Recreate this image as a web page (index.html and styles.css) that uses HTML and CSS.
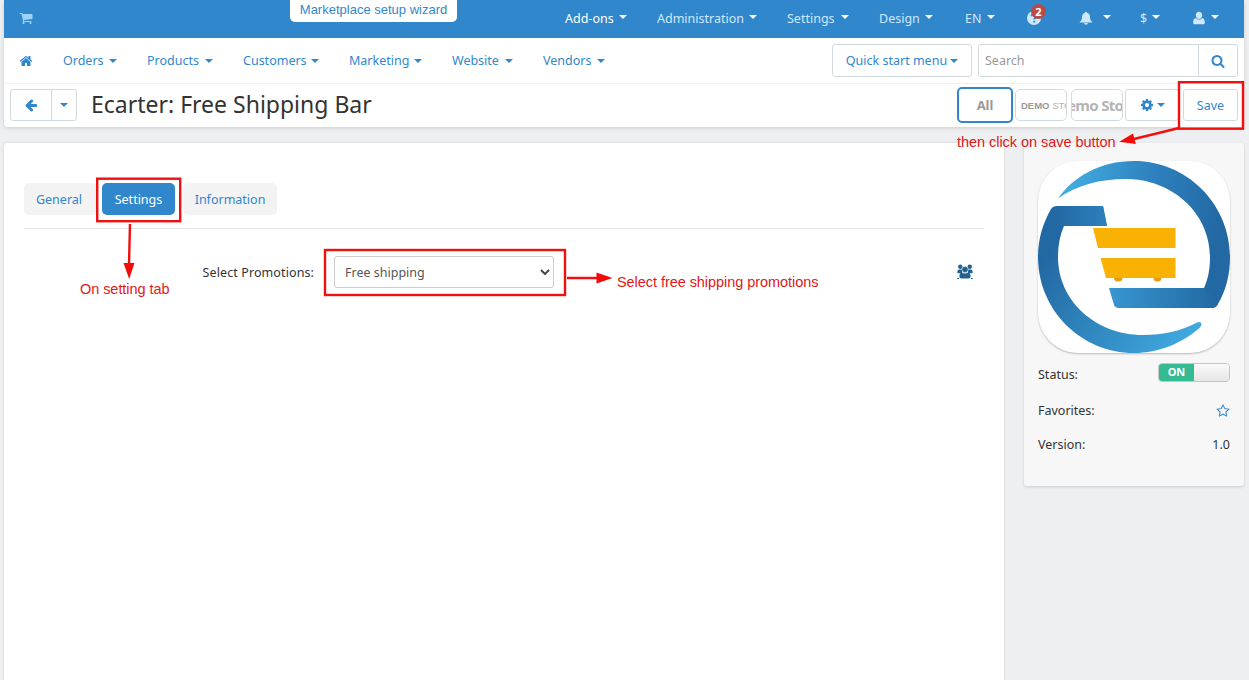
FILE: index.html
```html
<!DOCTYPE html>
<html lang="en">
<head>
    <meta charset="UTF-8">
    <meta name="viewport" content="width=device-width, initial-scale=1.0">
    <title>Ecarter: Free Shipping Bar</title>
    <link rel="stylesheet" href="styles.css">
</head>
<body>

<div class="page">
    <header class="header">
        <div class="topbar">
            <svg class="icon cart" viewBox="0 0 1792 1792"><path d="M704 1536q0 52-38 90t-90 38-90-38-38-90 38-90 90-38 90 38 38 90zm896 0q0 52-38 90t-90 38-90-38-38-90 38-90 90-38 90 38 38 90zm128-1088v512q0 24-16.5 42.5t-40.5 21.5l-1044 122q13 60 13 70 0 16-24 64h920q26 0 45 19t19 45-19 45-45 19h-1024q-26 0-45-19t-19-45q0-11 8-31.5t16-36 21.5-40 15.5-29.5l-177-823h-204q-26 0-45-19t-19-45 19-45 45-19h256q16 0 28.5 6.5t19.5 15.5 13 24.5 8 26 5.5 29.5 4.5 26h1201q26 0 45 19t19 45z"/></svg>
            <a class="wizard">Marketplace setup wizard</a>
            <nav class="top-menu">
                <a class="item active w-addons">Add-ons<i class="caret"></i></a>
                <a class="item w-admin">Administration<i class="caret"></i></a>
                <a class="item w-settings">Settings<i class="caret"></i></a>
                <a class="item w-design">Design<i class="caret"></i></a>
                <a class="item w-lang">EN<i class="caret"></i></a>
                <a class="item w-help">
                    <svg class="icon help" viewBox="0 0 16 16"><circle cx="8" cy="8" r="7"/><path class="mark" d="M5.6 6.3C5.8 3.6 10.3 3.8 10.2 6.4 10.1 8 8.3 7.9 8.2 9.4M8.2 10.8v1.8"/></svg>
                    <span class="badge">2</span>
                </a>
                <a class="item w-bell"><svg class="icon bell" viewBox="0 0 16 16"><path d="M8 0.8c.7 0 1 .5 1 1.1 2.4.5 3.5 2.400 3.500 4.600 0 3.200 1 4.900 2.700 6.100v.6H.8v-.6C2.500 11.400 3.500 9.700 3.500 6.500 3.500 4.300 4.600 2.400 7 1.900c0-.6.3-1.100 1-1.100zM6 13.700h4c0 1.100-.9 1.900-2 1.900s-2-.8-2-1.900z"/></svg><i class="caret"></i></a>
                <a class="item w-money">$<i class="caret"></i></a>
                <a class="item w-user"><svg class="icon user" viewBox="0 0 12 14"><path d="M6 .8c1.900 0 3.200 1.500 3.200 3.400S7.900 7.900 6 7.900 2.800 6.100 2.800 4.200 4.100.8 6 .8zM3 7.100c.8 1 1.800 1.500 3 1.500s2.200-.5 3-1.500c2 .2 2.800 2 2.800 4.300 0 1.200-.8 1.900-1.800 1.900H2C1 13.300.2 12.600.2 11.400.2 9.100 1 7.300 3 7.100z"/></svg><i class="caret"></i></a>
            </nav>
        </div>

        <div class="navbar">
            <svg class="icon home" viewBox="0 0 1792 1792"><path d="M1472 992v480q0 26-19 45t-45 19h-384v-384h-256v384h-384q-26 0-45-19t-19-45v-480q0-1 .5-3t.5-3l575-474 575 474q1 2 1 6zm223-69l-62 74q-8 9-21 11h-3q-13 0-21-7l-692-577-692 577q-12 8-24 7-13-2-21-11l-62-74q-8-10-7-23.500t11-21.500l719-599q32-26 76-26t76 26l244 204v-195q0-14 9-23t23-9h192q14 0 23 9t9 23v408l219 182q10 8 11 21.500t-7 23.500z"/></svg>
            <nav class="main-menu">
                <a class="item w-orders">Orders<i class="caret"></i></a>
                <a class="item w-products">Products<i class="caret"></i></a>
                <a class="item w-customers">Customers<i class="caret"></i></a>
                <a class="item w-marketing">Marketing<i class="caret"></i></a>
                <a class="item w-website">Website<i class="caret"></i></a>
                <a class="item w-vendors">Vendors<i class="caret"></i></a>
            </nav>
            <a class="btn quick">Quick start menu<i class="caret"></i></a>
            <div class="search">
                <input type="text" placeholder="Search">
                <button><svg class="icon" viewBox="0 0 1792 1792"><path d="M1216 832q0-185-131.500-316.500t-316.500-131.500-316.500 131.500-131.500 316.500 131.500 316.500 316.500 131.500 316.500-131.500 131.500-316.500zm512 832q0 52-38 90t-90 38q-54 0-90-38l-343-342q-179 124-399 124-143 0-273.500-55.500t-225-150-150-225-55.500-273.500 55.500-273.500 150-225 225-150 273.500-55.500 273.500 55.500 225 150 150 225 55.500 273.500q0 220-124 399l343 343q37 37 37 90z"/></svg></button>
            </div>
        </div>

        <div class="titlebar">
            <div class="back">
                <a><svg class="icon" viewBox="0 0 1792 1792"><path d="M1664 896v128q0 53-32.500 90.500t-84.500 37.500h-704l293 294q38 36 38 90t-38 90l-75 76q-37 37-90 37-52 0-91-37l-651-652q-37-37-37-90 0-52 37-91l651-650q38-38 91-38 52 0 90 38l75 74q38 38 38 91t-38 91l-293 293h704q52 0 84.500 37.500t32.500 90.500z"/></svg></a>
                <a><i class="caret"></i></a>
            </div>
            <h1>Ecarter: Free Shipping Bar</h1>
            <div class="actions">
                <a class="store all">All</a>
                <a class="store demo"><span><b>DEMO</b> STORE</span></a>
                <a class="store demo-big"><span>Demo Store</span></a>
                <a class="btn gear"><svg class="icon" viewBox="0 0 1792 1792"><path d="M1152 896q0-106-75-181t-181-75-181 75-75 181 75 181 181 75 181-75 75-181zm512-109v222q0 12-8 23t-20 13l-185 28q-19 54-39 91 35 50 107 138 10 12 10 25t-9 23q-27 37-99 108t-94 71q-12 0-26-9l-138-108q-44 23-91 38-16 136-29 186-7 28-36 28h-222q-14 0-24.500-8.500t-11.500-21.500l-28-184q-49-16-90-37l-141 107q-10 9-25 9-14 0-25-11-126-114-165-168-7-10-7-23 0-12 8-23 15-21 51-66.500t54-70.500q-27-50-41-99l-183-27q-13-2-21-12.500t-8-23.500v-222q0-12 8-23t19-13l186-28q14-46 39-92-40-57-107-138-10-12-10-24 0-10 9-23 26-36 98.500-107.500t94.500-71.500q13 0 26 10l138 107q44-23 91-38 16-136 29-186 7-28 36-28h222q14 0 24.500 8.500t11.500 21.500l28 184q49 16 90 37l142-107q9-9 24-9 13 0 25 10 129 119 165 170 7 8 7 22 0 12-8 23-15 21-51 66.500t-54 70.500q26 50 41 98l183 28q13 2 21 12.500t8 23.500z"/></svg><i class="caret"></i></a>
                <a class="btn save">Save</a>
            </div>
        </div>
    </header>

    <div class="columns">
        <main class="content">
            <div class="tabs">
                <a class="tab t-general">General</a>
                <a class="tab t-settings active">Settings</a>
                <a class="tab t-info">Information</a>
            </div>
            <div class="form-row">
                <label for="promotion">Select Promotions:</label>
                <div class="select">
                    <select id="promotion">
                        <option>Free shipping</option>
                    </select>
                    <svg class="chevron" viewBox="0 0 10 6"><path d="M1 1l4 4 4-4"/></svg>
                </div>
                <svg class="group" viewBox="0 0 16 16">
                    <circle cx="3.300" cy="2.800" r="2.200"/><circle cx="12.700" cy="2.800" r="2.200"/>
                    <path d="M.3 8.500C.3 6.500 1 5.500 2.500 5.400L5 5.600v3.600H1.300c-.6 0-1-.2-1-.7zM15.700 8.500c0-2-.7-3-2.200-3.100L11 5.600v3.600h3.700c.6 0 1-.2 1-.7z"/>
                    <circle class="head" cx="8" cy="5.500" r="3.100"/>
                    <path d="M2.400 12.300C2.400 9.800 3.500 8.400 5 8.400c1.800 1.400 4.200 1.400 6 0 1.500 0 2.600 1.400 2.600 3.900 0 1.400-.9 2.200-2.200 2.200H4.600c-1.300 0-2.200-.8-2.200-2.200zM.2 14.100h1.900v.8H.2zM13.900 14.100h1.900v.8h-1.900z"/>
                </svg>
            </div>
        </main>

        <aside class="sidebar">
            <svg class="logo" viewBox="0 0 192 192">
                <defs>
                    <linearGradient id="upper" gradientUnits="userSpaceOnUse" x1="20" y1="50" x2="180" y2="85">
                        <stop offset="0" stop-color="#43aee2"/>
                        <stop offset="0.500" stop-color="#2e82bf"/>
                        <stop offset="1" stop-color="#2268a3"/>
                    </linearGradient>
                    <linearGradient id="hook" gradientUnits="userSpaceOnUse" x1="71" y1="137" x2="180" y2="137">
                        <stop offset="0" stop-color="#3896d0"/>
                        <stop offset="1" stop-color="#2268a3"/>
                    </linearGradient>
                    <linearGradient id="lower" gradientUnits="userSpaceOnUse" x1="10" y1="90" x2="150" y2="180">
                        <stop offset="0" stop-color="#2268a3"/>
                        <stop offset="1" stop-color="#40a9de"/>
                    </linearGradient>
                    <linearGradient id="handle" gradientUnits="userSpaceOnUse" x1="15" y1="55" x2="69" y2="55">
                        <stop offset="0" stop-color="#2268a3"/>
                        <stop offset="1" stop-color="#2e80bd"/>
                    </linearGradient>
                </defs>
                <path fill="url(#upper)" d="M20 37.500C35 16 62 0 96 0c53 0 96 43 96 96 0 18-4 33-12 47q-2 4-6 4h-15l7-20c4-9 6-19 6-31 0-44-38-78-84-78-26 0-49 6-68 19.500z"/>
                <path fill="url(#hook)" d="M71 127h95l14 16q-2 4-6 4H81q-4 0-5-3z"/>
                <path fill="url(#lower)" d="M19 45h46l4 20H26c-4 9-6 19-6 31 0 45 39 78 85 78 20 0 38-4 54-12.500q4-1.500 4.500 1.500 0 2-2 4C144 182 121 192 96 192 43 192 0 149 0 96c0-18 5-34 13-48q2-3 6-3z"/>
                <path fill="url(#handle)" d="M19 45h46l4 20H18z"/>
                <g fill="#f9b104">
                    <path d="M55 67h82.500v20H60zM62.500 97h75v20H68z"/>
                </g>
                <path fill="#e39b12" d="M76 117h8.500a4.250 3.500 0 0 1-8.500 0zM115.500 117h8a4 3.500 0 0 1-8 0z"/>
            </svg>
            <div class="info status"><span>Status:</span><span class="switch"><b>ON</b><i></i></span></div>
            <div class="info favorites"><span>Favorites:</span>
                <svg class="icon star" viewBox="0 0 1792 1792"><path d="M1201 1004l306-297-422-62-189-382-189 382-422 62 306 297-73 421 378-199 377 199zm527-357q0 22-26 48l-363 354 86 500q1 7 1 20 0 50-41 50-19 0-40-12l-449-236-449 236q-22 12-40 12-21 0-31.500-14.500t-10.500-35.500q0-6 2-20l86-500-364-354q-25-27-25-48 0-37 56-46l502-73 225-455q19-41 49-41t49 41l225 455 502 73q56 9 56 46z"/></svg>
            </div>
            <div class="info version"><span>Version:</span><span>1.0</span></div>
        </aside>
    </div>
</div>

<!-- Tutorial notes drawn over the admin panel -->
<svg class="notes" viewBox="0 0 1249 680">
    <g class="frames">
        <rect x="97.200" y="178.700" width="83" height="42.500"/>
        <rect x="325" y="250" width="240" height="45"/>
        <rect x="1179" y="82.200" width="64" height="46.500"/>
        <path d="M130 224L129 264M567 278h32M1179 128L1134 139"/>
    </g>
    <path class="heads" d="M123.500 263h11l-5.300 16zM596.500 272.500v11L612.500 278zM1133 133.500l2.800 10.500-16.500-2.300z"/>
    <text x="80" y="294" textLength="89.500">On setting tab</text>
    <text x="617" y="287" textLength="201.500">Select free shipping promotions</text>
    <text x="957" y="147" textLength="158.500">then click on save button</text>
</svg>

</body>
</html>
```
FILE: styles.css
```css
* {
    box-sizing: border-box;
}

body {
    margin: 0;
    height: 680px;
    overflow: hidden;
    background-color: #eeeff1;
    font-family: "Noto Sans", "Open Sans", sans-serif;
    font-size: 12.5px;
    color: #333;
}

.page {
    width: 1240px;
    margin-left: 4px;
}

.header {
    height: 127px;
    background-color: #fff;
    border-radius: 0 0 4px 4px;
    box-shadow: 0 1px 4px rgba(0, 0, 0, 0.15);
}

.icon {
    display: block;
    width: 14px;
    height: 14px;
    fill: currentColor;
}

.caret {
    flex: none;
    border: 4px solid transparent;
    border-top-color: currentColor;
    border-bottom: 0;
}

/* Blue bar */
.topbar {
    display: flex;
    height: 38px;
    padding-left: 15px;
    background-color: #3087cc;
    color: #fff;
}

.cart {
    margin: 11px 0 0;
    color: #9fd2f7;
}

.wizard {
    width: 167px;
    height: 22px;
    margin-left: 257px;
    border-radius: 0 0 5px 5px;
    background-color: #fff;
    color: #3087cc;
    font: 13px/19px "Liberation Sans", Arial, sans-serif;
    text-align: center;
}

.top-menu {
    display: flex;
    gap: 30px;
    height: 36px;
    margin-left: 108px;
    color: #cfe8fb;
}

.item {
    display: flex;
    align-items: center;
    justify-content: space-between;
    white-space: nowrap;
}

.top-menu .active,
.top-menu .caret {
    color: #fff;
}

.top-menu .caret {
    margin-bottom: 2px;
}

.w-addons { width: 62px; }
.w-admin { width: 100px; }
.w-settings { width: 62px; }
.w-design { width: 54px; margin-right: 2px; }
.w-lang { width: 30px; }
.w-help { width: 16px; position: relative; margin-right: 7px; margin-left: 1px; }
.w-bell { width: 32px; margin-right: -1px; }
.w-money { width: 20px; }
.w-user { width: 26px; margin-left: 3px; }

.help {
    width: 16px;
    height: 16px;
}

.mark {
    fill: none;
    stroke: #3087cc;
    stroke-width: 2;
}

.badge {
    position: absolute;
    top: 4px;
    left: 5px;
    width: 15px;
    height: 15px;
    border-radius: 8px;
    background-color: #b94a48;
    color: #fff;
    font-size: 11px;
    font-weight: bold;
    line-height: 15px;
    text-align: center;
}

.user {
    width: 12px;
}

/* White menu */
.navbar {
    display: flex;
    align-items: center;
    height: 46px;
    padding: 0 6px 0 15px;
    border-bottom: 1px solid #f0f1f2;
    color: #3087cc;
}

.main-menu {
    display: flex;
    gap: 30px;
    margin-left: 30px;
}

.w-orders { width: 54px; }
.w-products { width: 66px; }
.w-customers { width: 76px; }
.w-marketing { width: 73px; }
.w-website { width: 61px; }
.w-vendors { width: 62px; }

.btn {
    display: flex;
    align-items: center;
    justify-content: center;
    height: 32px;
    border: 1px solid #d3dadf;
    border-radius: 3px;
    background-color: #fff;
    color: #3087cc;
}

.quick {
    width: 140px;
    height: 33px;
    gap: 3px;
    margin-left: auto;
    white-space: nowrap;
}

.search {
    display: flex;
    width: 260px;
    height: 33px;
    margin-left: 6px;
    border: 1px solid #d3dadf;
    border-radius: 3px;
}

.search input {
    width: 219px;
    padding: 0 6px;
    border: 0;
    background: none;
    font: inherit;
}

.search input::placeholder {
    color: #999;
}

.search button {
    display: flex;
    align-items: center;
    justify-content: center;
    width: 39px;
    padding: 0;
    border: 0;
    border-left: 1px solid #d3dadf;
    background: none;
    color: #3087cc;
}

/* Title row */
.titlebar {
    display: flex;
    align-items: center;
    height: 42px;
    padding: 0 6px;
}

.back {
    display: flex;
    width: 67px;
    height: 32px;
    border: 1px solid #d3dadf;
    border-radius: 3px;
    color: #3087cc;
}

.back a {
    display: flex;
    flex: 1;
    align-items: center;
    justify-content: center;
}

.back a:first-child {
    flex: 0 0 41px;
    border-right: 1px solid #d3dadf;
}

h1 {
    margin: -2px 0 0 14px;
    font-size: 23px;
    font-weight: normal;
    line-height: 32px;
    white-space: nowrap;
}

.actions {
    display: flex;
    align-items: center;
    margin-left: auto;
}

.store {
    display: flex;
    align-items: center;
    justify-content: center;
    width: 52px;
    height: 32px;
    margin-right: 4px;
    overflow: hidden;
    border: 1px solid #d3dadf;
    border-radius: 5px;
    color: #b4b4b4;
    white-space: nowrap;
}

.all {
    width: 56px;
    height: 36px;
    margin-right: 2px;
    border: 2px solid #3087cc;
    color: #999;
    font-size: 13px;
    font-weight: bold;
}

.demo {
    justify-content: flex-start;
    padding-left: 5px;
    font: 9.5px "Liberation Sans", Arial, sans-serif;
}

.demo b {
    color: #999;
}

.demo-big {
    margin-right: 2px;
    font-size: 15px;
    font-weight: bold;
    letter-spacing: -0.7px;
}

.gear {
    width: 54px;
    gap: 3px;
}

.save {
    width: 55px;
    margin-left: 4px;
}

/* Page body */
.columns {
    display: flex;
    align-items: flex-start;
    gap: 20px;
    margin-top: 16px;
}

.content {
    width: 1000px;
    height: 540px;
    padding: 40px 20px;
    border-radius: 4px;
    background-color: #fff;
    box-shadow: 0 0 3px rgba(0, 0, 0, 0.12);
}

.tabs {
    display: flex;
    gap: 4px;
    height: 46px;
    border-bottom: 1px solid #dfe3e6;
}

.tab {
    height: 32px;
    border-radius: 5px;
    background-color: #f3f3f3;
    color: #3087cc;
    line-height: 33px;
    text-align: center;
}

.tab.active {
    background-color: #3087cc;
    color: #fff;
}

.t-general { width: 74px; padding-right: 4px; }
.t-settings { width: 73px; }
.t-info { width: 94px; margin-left: 4px; }

.form-row {
    display: flex;
    align-items: center;
    margin-top: 27px;
}

.form-row label {
    width: 290px;
    letter-spacing: 0.1px;
    text-align: right;
}

.select {
    position: relative;
    width: 220px;
    height: 32px;
    margin-left: 20px;
}

.select select {
    width: 100%;
    height: 100%;
    padding: 0 10px;
    border: 1px solid #ccc;
    border-radius: 3px;
    background-color: #fff;
    color: #555;
    font: inherit;
    appearance: none;
}

.chevron {
    position: absolute;
    top: 13px;
    right: 4px;
    width: 10px;
    height: 6px;
    fill: none;
    stroke: #444;
    stroke-width: 2;
}

.group {
    width: 16px;
    height: 16px;
    margin: 0 11px 0 auto;
    fill: #23618e;
}

.group .head {
    stroke: #fff;
    stroke-width: 0.4;
}

.sidebar {
    width: 220px;
    height: 343px;
    padding: 18px 14px;
    border-radius: 3px;
    background-color: #f7f7f8;
    box-shadow: 0 1px 3px rgba(0, 0, 0, 0.15);
}

.logo {
    display: block;
    width: 192px;
    height: 192px;
    border-radius: 40px;
    background-color: #fff;
    box-shadow: 0 1px 2px rgba(0, 0, 0, 0.25);
}

.info {
    display: flex;
    align-items: center;
    justify-content: space-between;
    height: 20px;
}

.status { margin-top: 11px; }
.favorites { margin-top: 16px; }
.version { margin-top: 14px; }

.switch {
    display: flex;
    width: 72px;
    height: 19px;
    margin-top: -4px;
    overflow: hidden;
    border: 1px solid #c6c6c6;
    border-radius: 4px;
}

.switch b {
    width: 35px;
    background-color: #35bb93;
    color: #fff;
    font-size: 11px;
    line-height: 16px;
    text-align: center;
}

.switch i {
    flex: 1;
    background: linear-gradient(#fafafa, #e6e6e6);
}

.star {
    margin-top: 1px;
    color: #3087cc;
}

/* Red notes */
.notes {
    position: absolute;
    top: 0;
    left: 0;
    width: 1249px;
    height: 680px;
    pointer-events: none;
}

.frames {
    fill: none;
    stroke: #f01010;
    stroke-width: 2.4;
}

.heads {
    fill: #f50a0a;
}

.notes text {
    fill: #e01818;
    font: 14.5px "Liberation Sans", Arial, sans-serif;
}
```
